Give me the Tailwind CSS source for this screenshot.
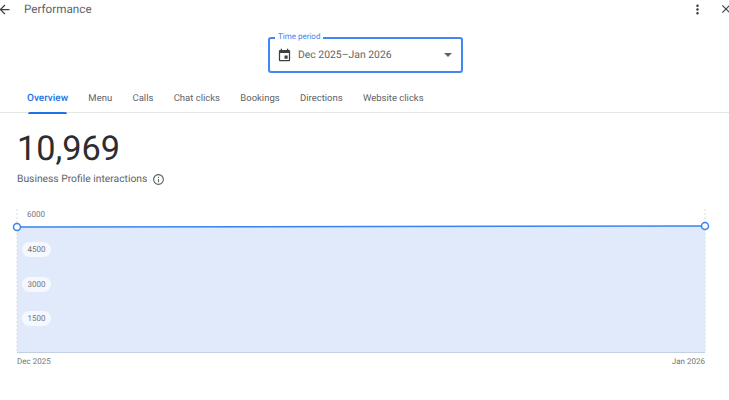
<!DOCTYPE html>
<html lang="en">
<head>
    <meta charset="UTF-8">
    <meta name="viewport" content="width=device-width, initial-scale=1.0">
    <title>Performance</title>
    <script src="https://cdn.jsdelivr.net/npm/@tailwindcss/browser@4"></script>
</head>
<body class="bg-white h-[400px] w-[729px] overflow-hidden font-['Roboto',sans-serif] text-[#5f6368] [text-rendering:geometricPrecision]">

    <!-- top bar -->
    <header class="h-[18px] flex items-center relative">
        <svg class="w-[15px] h-[15px] ml-[-3px] shrink-0 text-[#3c4043]" viewBox="0 0 24 24" fill="currentColor"><path d="M20 11H7.83l5.59-5.59L12 4l-8 8 8 8 1.41-1.41L7.83 13H20v-2z"/></svg>
        <h1 class="ml-[12px] mt-[1px] text-[11.7px] leading-none text-[#5f6368]">Performance</h1>
        <div class="ml-auto flex items-center">
            <svg class="w-[15px] h-[15px] text-[#3c4043]" viewBox="0 0 24 24" fill="currentColor"><path d="M12 8c1.1 0 2-.9 2-2s-.9-2-2-2-2 .9-2 2 .9 2 2 2zm0 2c-1.1 0-2 .9-2 2s.9 2 2 2 2-.9 2-2-.9-2-2-2zm0 6c-1.1 0-2 .9-2 2s.9 2 2 2 2-.9 2-2-.9-2-2-2z"/></svg>
            <svg class="w-[14px] h-[14px] ml-[14px] mr-[-4px] text-[#3c4043]" viewBox="0 0 24 24" fill="currentColor"><path d="M19 6.41 17.59 5 12 10.59 6.41 5 5 6.41 10.59 12 5 17.59 6.41 19 12 13.41 17.59 19 19 17.59 13.41 12z"/></svg>
        </div>
    </header>

    <!-- time period select -->
    <div class="flex justify-center pt-[19px]">
        <div class="relative w-[195px] h-[36px] ml-[2px] border-2 border-[#4285f4] rounded-[3px] flex items-center pl-[7px] pr-[9px]">
            <span class="absolute left-[5px] top-[-7px] bg-white px-[3px] text-[8px] leading-[10px] text-[#4285f4]">Time period</span>
            <svg class="w-[15px] h-[15px] text-[#3c4043]" viewBox="0 0 24 24" fill="currentColor"><path d="M17 12h-5v5h5v-5zM16 1v2H8V1H6v2H5c-1.11 0-1.99.9-1.99 2L3 19c0 1.1.89 2 2 2h14c1.1 0 2-.9 2-2V5c0-1.1-.9-2-2-2h-1V1h-2zm3 18H5V8h14v11z"/></svg>
            <span class="ml-[6px] text-[10.4px] text-[#5f6368]">Dec 2025–Jan 2026</span>
            <span class="ml-auto w-0 h-0 border-x-[4px] border-x-transparent border-t-[4px] border-t-[#5f6368]"></span>
        </div>
    </div>

    <!-- tabs -->
    <nav class="mt-[13px] h-[27px] border-b border-[#e4e6e8] flex gap-[20.3px] pl-[27px] text-[9.5px]">
        <span class="relative h-[27px] leading-[25px] text-[10px] font-medium text-[#1a73e8]">Overview<span class="absolute left-[1px] right-[1px] bottom-[-1px] h-[2px] rounded-t bg-[#1a73e8]"></span></span>
        <span class="leading-[25px]">Menu</span>
        <span class="leading-[25px]">Calls</span>
        <span class="leading-[25px]">Chat clicks</span>
        <span class="leading-[25px]">Bookings</span>
        <span class="leading-[25px]">Directions</span>
        <span class="leading-[25px]">Website clicks</span>
    </nav>

    <!-- headline figure -->
    <div class="pl-[17px] pt-[16px]">
        <div class="text-[34.3px] leading-[40px] text-[#2b2d30]">10,969</div>
        <div class="mt-[3px] flex items-center gap-[5px] text-[10.3px] leading-[14px] text-[#5f6368]">
            <span>Business Profile interactions</span>
            <svg class="w-[13px] h-[13px]" viewBox="0 0 24 24" fill="currentColor"><path d="M11 7h2v2h-2zm0 4h2v6h-2zm1-9C6.48 2 2 6.48 2 12s4.48 10 10 10 10-4.48 10-10S17.52 2 12 2zm0 18c-4.41 0-8-3.59-8-8s3.59-8 8-8 8 3.59 8 8-3.59 8-8 8z"/></svg>
        </div>
    </div>

    <!-- chart -->
    <div class="relative mt-[21px] mx-[17px] w-[688px] h-[160px] text-[8px] text-[#70757a]">
        <svg class="absolute left-[-6px] top-[0px] overflow-visible" width="700" height="152" viewBox="0 0 700 152">
            <path d="M6 20 L694 19 L694 145 L6 145 Z" fill="#e1eafb"/>
            <path d="M6 2 V145 M694 2 V145" stroke="#d6dce6" stroke-width="1" stroke-dasharray="2 2" fill="none"/>
            <path d="M6 145.5 H694" stroke="#c3cfe2" stroke-width="1" fill="none"/>
            <path d="M6 20 L694 19" stroke="#3b82f0" stroke-width="1.5" fill="none"/>
            <circle cx="6" cy="20" r="3.5" fill="#fff" stroke="#3b82f0" stroke-width="1.5"/>
            <circle cx="694" cy="19" r="3.5" fill="#fff" stroke="#3b82f0" stroke-width="1.5"/>
        </svg>
        <span class="absolute left-[10px] top-[3px] leading-[10px]">6000</span>
        <span class="absolute left-[5px] top-[35px] h-[15px] px-[5.5px] rounded-full bg-[#f5f8fe] leading-[15px]">4500</span>
        <span class="absolute left-[5px] top-[69.5px] h-[15px] px-[5.5px] rounded-full bg-[#f5f8fe] leading-[15px]">3000</span>
        <span class="absolute left-[5px] top-[104px] h-[15px] px-[5.5px] rounded-full bg-[#f5f8fe] leading-[15px]">1500</span>
        <span class="absolute left-0 top-[150px] leading-[10px]">Dec 2025</span>
        <span class="absolute right-0 top-[150px] leading-[10px]">Jan 2026</span>
    </div>
</body>
</html>
